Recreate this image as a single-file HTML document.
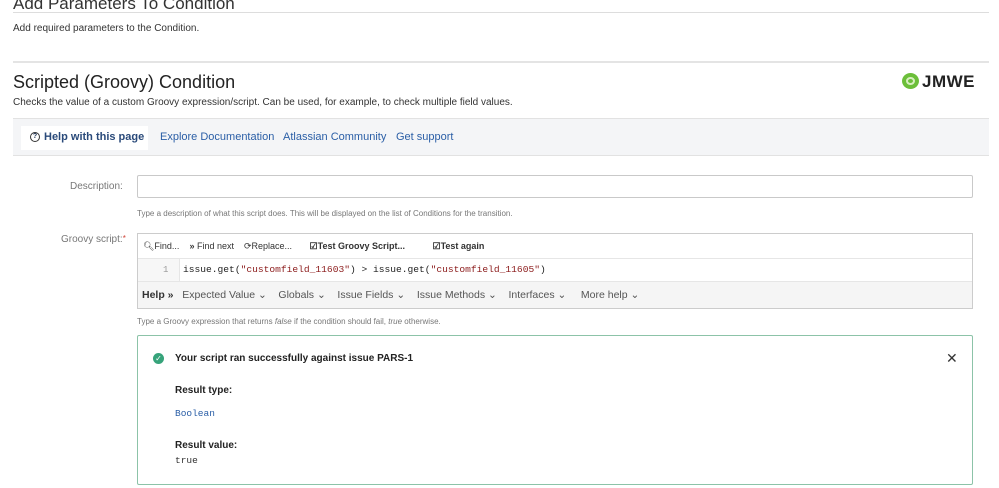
<!DOCTYPE html>
<html><head><meta charset="utf-8"><style>
*{margin:0;padding:0;box-sizing:border-box}
body{width:999px;height:488px;overflow:hidden;background:#fff;font-family:"Liberation Sans",sans-serif;color:#172b4d;position:relative}
.a{position:absolute}
.mono{font-family:"Liberation Mono",monospace}
</style></head><body>
<div class="a" style="left:13px;top:-6px;font-size:17px;color:#333">Add Parameters To Condition</div>
<div class="a" style="left:13px;top:12px;width:976px;height:1px;background:#ddd"></div>
<div class="a" style="left:13px;top:23px;font-size:10px;color:#333">Add required parameters to the Condition.</div>
<div class="a" style="left:13px;top:61px;width:976px;height:2px;background:#e4e4e4"></div>
<div class="a" style="left:13px;top:72px;font-size:18px;color:#222">Scripted (Groovy) Condition</div>
<div class="a" style="left:13px;top:97px;font-size:10px;color:#333">Checks the value of a custom Groovy expression/script. Can be used, for example, to check multiple field values.</div>
<div class="a" style="left:902px;top:73px;width:17px;height:16px;border-radius:50%;background:#6cbf3a"></div>
<div class="a" style="left:906px;top:77px;width:9px;height:8px;border-radius:50%;border:2px solid #d8f0c0"></div>
<div class="a" style="left:922px;top:72px;font-size:17px;font-weight:bold;color:#222;letter-spacing:0.5px">JMWE</div>
<div class="a" style="left:13px;top:118px;width:976px;height:38px;background:#f4f5f7;border-top:1px solid #e2e2e2;border-bottom:1px solid #e2e2e2"></div>
<div class="a" style="left:21px;top:126px;width:127px;height:24px;background:#fff"></div>
<div class="a" style="left:30px;top:132px;width:10px;height:10px;border:1px solid #333;border-radius:50%;font-size:7px;line-height:8px;text-align:center;font-weight:bold">?</div>
<div class="a" style="left:44px;top:131px;font-size:11px;font-weight:bold;color:#2a4a7a">Help with this page</div>
<div class="a" style="left:160px;top:131px;font-size:11px;color:#2a5ea6">Explore Documentation</div>
<div class="a" style="left:283px;top:131px;font-size:11px;color:#2a5ea6">Atlassian Community</div>
<div class="a" style="left:396px;top:131px;font-size:11px;color:#2a5ea6">Get support</div>
<div class="a" style="left:70px;top:181px;font-size:10px;color:#777">Description:</div>
<div class="a" style="left:137px;top:175px;width:836px;height:23px;border:1px solid #c9c9c9;border-radius:2px"></div>
<div class="a" style="left:137px;top:209px;font-size:8px;color:#777">Type a description of what this script does. This will be displayed on the list of Conditions for the transition.</div>
<div class="a" style="left:61px;top:234px;font-size:10px;color:#777">Groovy script:<span style="color:#d04437;font-size:8px;vertical-align:top">*</span></div>
<div class="a" style="left:137px;top:233px;width:836px;height:76px;border:1px solid #ccc"></div>
<div class="a" style="left:143px;top:241px;font-size:9px;color:#333;white-space:nowrap">&#x1F50D;&#xFE0E;Find...&nbsp;&nbsp;&nbsp; <b>»</b> Find next&nbsp;&nbsp;&nbsp; ⟳Replace...&nbsp;&nbsp;&nbsp;&nbsp;&nbsp;&nbsp; <b>☑Test Groovy Script...</b>&nbsp;&nbsp;&nbsp;&nbsp;&nbsp;&nbsp;&nbsp;&nbsp;&nbsp;&nbsp; <b>☑Test again</b></div>
<div class="a" style="left:138px;top:258px;width:834px;height:1px;background:#e6e6e6"></div>
<div class="a" style="left:138px;top:259px;width:42px;height:22px;background:#f7f7f7;border-right:1px solid #e6e6e6"></div>
<div class="a mono" style="left:163px;top:265px;font-size:9px;color:#999">1</div>
<div class="a mono" style="left:183px;top:264px;font-size:9.6px;color:#222;white-space:nowrap">issue.get(<span style="color:#8b1a1a">"customfield_11603"</span>) &gt; issue.get(<span style="color:#8b1a1a">"customfield_11605"</span>)</div>
<div class="a" style="left:138px;top:281px;width:834px;height:27px;background:#f5f5f5;border-top:1px solid #e6e6e6"></div>
<div class="a" style="left:142px;top:289px;font-size:10.5px;color:#555;white-space:nowrap"><b style="color:#333">Help »</b>&nbsp;&nbsp; Expected Value ⌄&nbsp;&nbsp;&nbsp; Globals ⌄&nbsp;&nbsp;&nbsp; Issue Fields ⌄&nbsp;&nbsp;&nbsp; Issue Methods ⌄&nbsp;&nbsp;&nbsp; Interfaces ⌄&nbsp;&nbsp;&nbsp;&nbsp; More help ⌄</div>
<div class="a" style="left:137px;top:317px;font-size:8px;color:#777">Type a Groovy expression that returns <i>false</i> if the condition should fail, <i>true</i> otherwise.</div>
<div class="a" style="left:137px;top:335px;width:836px;height:150px;border:1px solid #8cc3a8;border-radius:2px"></div>
<div class="a" style="left:153px;top:353px;width:11px;height:11px;border-radius:50%;background:#36a37a;color:#fff;font-size:8px;line-height:11px;text-align:center">✓</div>
<div class="a" style="left:175px;top:353px;font-size:10px;font-weight:bold;color:#222">Your script ran successfully against issue PARS-1</div>
<div class="a" style="left:946px;top:350px;font-size:14px;color:#333">✕</div>
<div class="a" style="left:175px;top:385px;font-size:10px;font-weight:bold;color:#222">Result type:</div>
<div class="a mono" style="left:175px;top:408px;font-size:9.5px;color:#2a5ea6">Boolean</div>
<div class="a" style="left:175px;top:440px;font-size:10px;font-weight:bold;color:#222">Result value:</div>
<div class="a mono" style="left:175px;top:455px;font-size:9.5px;color:#333">true</div>
</body></html>
